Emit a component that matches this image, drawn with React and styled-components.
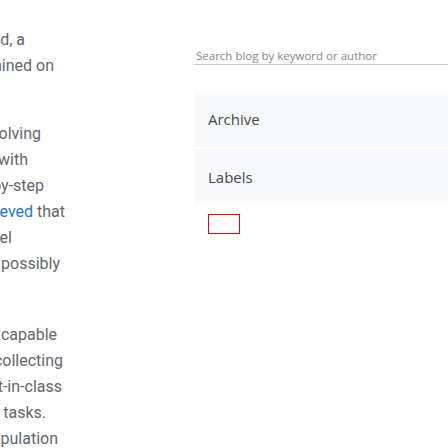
import styled, { createGlobalStyle } from 'styled-components';

const GlobalStyle = createGlobalStyle`
  html, body {
    margin: 0;
    padding: 0;
    background: #fff;
    overflow: hidden;
  }
`;

const Page = styled.div`
  display: grid;
  grid-template-columns: 150px 1fr;
  column-gap: 44px;
  width: 448px;
  height: 448px;
  overflow: hidden;
`;

const Article = styled.article`
  padding-top: 27px;
  font-family: Roboto, "Liberation Sans", sans-serif;
  font-size: 16px;
  line-height: 26px;
  color: #62666b;
`;

const Paragraph = styled.div`
  margin-top: ${props => props.$gap || 0}px;
`;

// each line is right-aligned to where it ends on screen, the start runs off the left edge
const Line = styled.div`
  display: flex;
  justify-content: flex-end;
  width: ${props => props.$end}px;
  height: 26px;
  overflow: hidden;
  white-space: nowrap;
`;

const Words = styled.span`
  flex: none;
`;

const TextLink = styled.a`
  color: #1a73e8;
  text-decoration: none;
`;

const Sidebar = styled.aside`
  display: flex;
  flex-direction: column;
  padding-top: 46px;
  font-family: "Open Sans", "Noto Sans", sans-serif;
`;

const SearchInput = styled.input`
  height: 18px;
  padding: 0 2px;
  margin: 0;
  border: none;
  border-bottom: 1px solid #c4c7c5;
  outline: none;
  background: transparent;
  font-family: inherit;
  font-size: 11.5px;
  color: #3c4043;

  &::placeholder {
    color: #80868b;
  }
`;

const MenuList = styled.div`
  display: flex;
  flex-direction: column;
  gap: 2px;
  margin-top: 26px;
`;

const MenuItem = styled.div`
  display: flex;
  align-items: center;
  height: 56px;
  padding: 0 14px;
  background: #f8f9fa;
  font-size: 15px;
  color: #45494d;
`;

const Placeholder = styled.div`
  box-sizing: border-box;
  width: 32px;
  height: 20px;
  margin: 9px 0 0 14px;
  border: 1px solid #ff0000;
`;

const paragraphs = [
  {
    gap: 0,
    lines: [
      { end: 25, text: 'models were trained, a' },
      { end: 54, text: 'which were then trained on' },
    ],
  },
  {
    gap: 42,
    lines: [
      { end: 41, text: 'tasks involving' },
      { end: 28, text: 'along with' },
      { end: 44, text: 'a step-by-step' },
      { end: 65, link: 'achieved', text: ' that' },
      { end: 12, text: 'the model' },
      { end: 60, text: 'and possibly' },
    ],
  },
  {
    gap: 45,
    lines: [
      { end: 57, text: 'a robot capable' },
      { end: 63, text: 'by collecting' },
      { end: 62, text: 'best-in-class' },
      { end: 46, text: 'the tasks.' },
      { end: 58, text: 'manipulation' },
    ],
  },
];

const App = () => (
  <>
    <GlobalStyle />
    <Page>
      <Article>
        {paragraphs.map((para, i) => (
          <Paragraph key={i} $gap={para.gap}>
            {para.lines.map((line, j) => (
              <Line key={j} $end={line.end}>
                <Words>
                  {line.link && <TextLink href="#">{line.link}</TextLink>}
                  {line.text}
                </Words>
              </Line>
            ))}
          </Paragraph>
        ))}
      </Article>
      <Sidebar>
        <SearchInput placeholder="Search blog by keyword or author" />
        <MenuList>
          <MenuItem>Archive</MenuItem>
          <MenuItem>Labels</MenuItem>
        </MenuList>
        <Placeholder />
      </Sidebar>
    </Page>
  </>
);

export default App;
